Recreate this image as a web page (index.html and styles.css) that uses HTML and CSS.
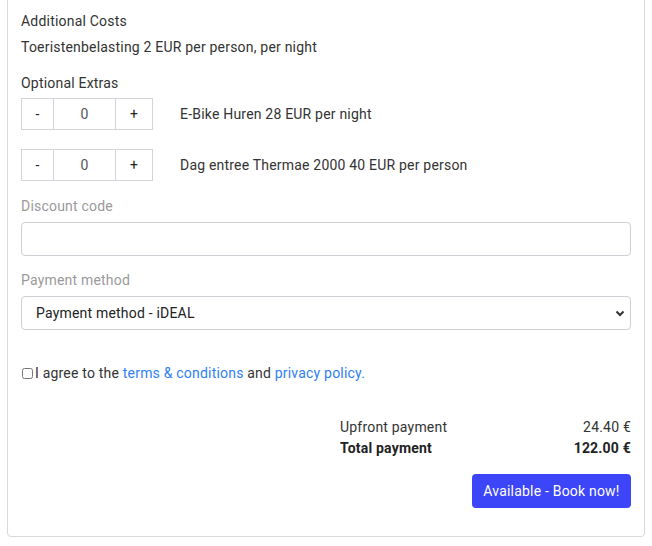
FILE: index.html
```html
<!DOCTYPE html>
<html>
<head>
<meta charset="utf-8">
<link rel="stylesheet" href="styles.css">
</head>
<body>
<div class="card">
  <div class="section-title">Additional Costs</div>
  <div class="line cost">Toeristenbelasting 2 EUR per person, per night</div>
  <div class="section-title extras">Optional Extras</div>
  <div class="extra">
    <div class="counter">
      <button class="btn-minus">-</button>
      <input class="qty" type="text" value="0">
      <button class="btn-plus">+</button>
    </div>
    <span class="extra-label">E-Bike Huren 28 EUR per night</span>
  </div>
  <div class="extra second">
    <div class="counter">
      <button class="btn-minus">-</button>
      <input class="qty" type="text" value="0">
      <button class="btn-plus">+</button>
    </div>
    <span class="extra-label">Dag entree Thermae 2000 40 EUR per person</span>
  </div>
  <label class="field-label discount-label">Discount code</label>
  <input class="text-input" type="text">
  <label class="field-label payment-label">Payment method</label>
  <div class="select-wrap">
    <select class="select">
      <option>Payment method - iDEAL</option>
    </select>
    <svg class="chevron" width="10" height="7" viewBox="0 0 10 7"><path d="M1.5 1.5 L5 5 L8.5 1.5" fill="none" stroke="#333" stroke-width="2"/></svg>
  </div>
  <div class="agree">
    <input type="checkbox" class="check">
    <span>I agree to the <a href="#">terms &amp; conditions</a> and <a href="#">privacy policy.</a></span>
  </div>
  <div class="totals">
    <span>Upfront payment</span><span class="amount">24.40 €</span>
    <span class="bold">Total payment</span><span class="amount bold">122.00 €</span>
  </div>
  <div class="actions">
    <button class="book">Available - Book now!</button>
  </div>
</div>
</body>
</html>
```
FILE: styles.css
```css
* { box-sizing: border-box; }
html, body { margin: 0; padding: 0; background: #fff; }
body {
  font-family: Roboto, "Liberation Sans", sans-serif;
  font-size: 14px;
  color: #333;
  line-height: 20px;
  letter-spacing: 0.2px;
}
.card {
  margin: -1px 6px 0 7px;
  width: 638px;
  border: 1px solid #d9d9dd;
  border-radius: 0 0 4px 4px;
  padding: 11px 13px 28px 13px;
  display: flex;
  flex-direction: column;
}
.section-title, .line { height: 20px; }
.cost { margin-top: 6px; }
.extras { margin-top: 16px; }
.extra {
  display: flex;
  align-items: center;
  margin-top: 5px;
}
.extra.second { margin-top: 19px; }
.counter {
  display: flex;
  height: 32px;
  border: 1px solid #d4d4da;
}
.counter button, .counter input {
  font-family: Roboto, "Liberation Sans", sans-serif;
  font-size: 14px;
  color: #222;
  background: #fff;
  border: 0;
  padding: 0;
  margin: 0;
  text-align: center;
  height: 30px;
}
.btn-minus { width: 31px; }
.qty {
  width: 63px;
  border-left: 1px solid #d4d4da !important;
  border-right: 1px solid #d4d4da !important;
  color: #555 !important;
  outline: none;
}
.btn-plus { width: 36px; }
.extra-label { margin-left: 27px; }
.field-label {
  display: block;
  color: #9a9a9a;
  height: 20px;
}
.discount-label { margin-top: 15px; }
.text-input {
  margin-top: 6px;
  width: 100%;
  height: 34px;
  border: 1px solid #cfd0d6;
  border-radius: 4px;
  padding: 0 14px;
  font: inherit;
  outline: none;
}
.payment-label { margin-top: 14px; }
.select-wrap {
  position: relative;
  margin-top: 6px;
}
.select {
  -webkit-appearance: none;
  appearance: none;
  width: 100%;
  height: 34px;
  border: 1px solid #cfd0d6;
  border-radius: 4px;
  padding: 0 14px;
  font-family: Roboto, "Liberation Sans", sans-serif;
  font-size: 14px;
  letter-spacing: 0.2px;
  color: #222;
  background: #fff;
  outline: none;
}
.chevron {
  position: absolute;
  right: 6px;
  top: 14px;
  pointer-events: none;
}
.agree {
  display: flex;
  align-items: center;
  margin-top: 33px;
  height: 20px;
}
.check {
  width: 11px;
  height: 11px;
  margin: 0 2px 0 1px;
}
.agree a {
  color: #2f80f5;
  text-decoration: none;
}
.totals {
  margin-top: 34px;
  align-self: flex-end;
  width: 291px;
  display: grid;
  grid-template-columns: 1fr auto;
  row-gap: 1px;
}
.amount { text-align: right; }
.bold { font-weight: 700; color: #222; }
.actions {
  display: flex;
  justify-content: flex-end;
  margin-top: 16px;
}
.book {
  height: 34px;
  width: 159px;
  background: #3c45f7;
  color: #fff;
  border: 0;
  border-radius: 4px;
  font-family: Roboto, "Liberation Sans", sans-serif;
  font-size: 14px;
  letter-spacing: 0.2px;
  padding: 0;
}
```
